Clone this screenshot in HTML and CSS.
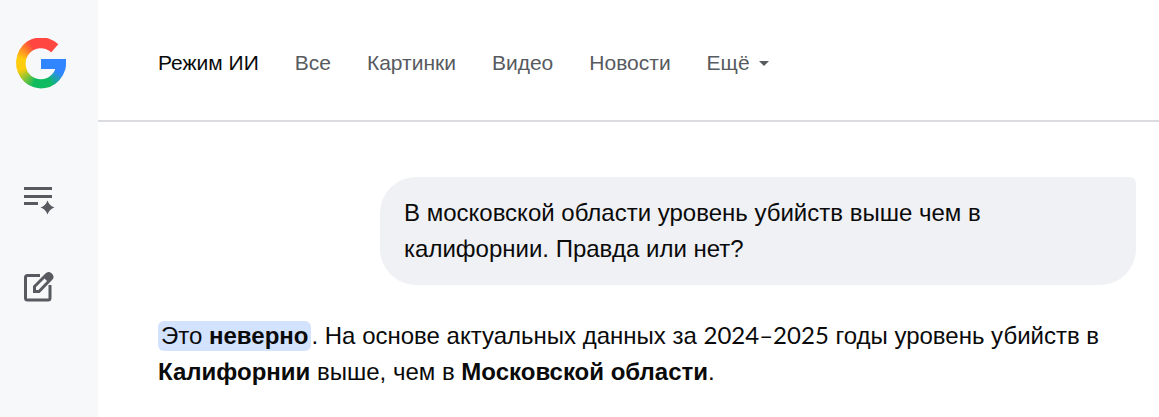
FILE: index.html
```html
<!DOCTYPE html>
<html lang="ru">
	<head>
		<meta charset="UTF-8" />
		<meta name="viewport" content="width=device-width, initial-scale=1.0" />
		<title>Режим ИИ</title>
		<link rel="stylesheet" href="styles.css">
	</head>
	<body>
		<aside class="sidebar">
			<a href="#" class="logo" aria-label="Google"></a>
			<button class="icon-btn" aria-label="История">
				<svg width="32" height="32" viewBox="0 0 32 32" fill="#575a5f">
					<path d="M1 3h28v3H1zM1 11h28v3H1zM1 18h14v3H1z" />
					<path d="M24.500 16.500q2 5.500 7 7q-5 1.500-7 7q-2-5.500-7-7q5-1.500 7-7z" />
				</svg>
			</button>
			<button class="icon-btn" aria-label="Новый запрос">
				<svg width="32" height="32" viewBox="0 0 32 32" fill="none" stroke="#575a5f" stroke-width="3">
					<path d="M17 5.500H4.500q-2 0-2 2V28q0 2 2 2H25q2 0 2-2V15" />
					<path d="M11.500 21.500v-5L23.500 4.500q2-2 4 0l.5.5q2 2 0 4L16 21.500z" stroke-linejoin="miter" />
					<path d="M20.500 7.500l4-4.500q1.500-1.500 3.500 0l1 1q1.500 1.500 0 3.500L25 12z" fill="#575a5f" stroke="none" />
				</svg>
			</button>
		</aside>

		<div class="page">
			<nav class="tabs">
				<a href="#" class="active">Режим ИИ</a>
				<a href="#">Все</a>
				<a href="#">Картинки</a>
				<a href="#">Видео</a>
				<a href="#">Новости</a>
				<button class="more">Ещё <span class="arrow"></span></button>
			</nav>

			<main class="chat">
				<div class="question">В московской области уровень убийств выше чем в калифорнии. Правда или нет?</div>
				<p class="answer"><mark>Это <b>неверно</b></mark>. На основе актуальных данных за <span class="years">2024–2025</span> годы уровень убийств в <b>Калифорнии</b> выше, чем в <b>Московской области</b>.</p>
			</main>
		</div>
	</body>
</html>
```
FILE: styles.css
```css
:root {
	--side-bg: #f7f8fa;
	--bubble: #f0f1f5;
	--mark: #d3e3fd;
	--line: #dadce0;
	--text: #0a0a0a;
	--gray: #575a5f;
}

* {
	box-sizing: border-box;
}

body {
	display: flex;
	min-height: 100vh;
	margin: 0;
	font-family: "Liberation Sans", Arial, sans-serif;
	color: var(--text);
	background: #fff;
}

.sidebar {
	display: flex;
	flex-direction: column;
	flex: 0 0 98px;
	padding: 38px 16px 0;
	background: var(--side-bg);
}

/* blue bar on top of the colour wheel, both cut to the G shape */
.logo {
	width: 50px;
	height: 52px;
	margin-bottom: 94px;
	background:
		linear-gradient(#3186ff, #3186ff) 25px 20px / 25px 12px no-repeat,
		conic-gradient(from 0deg at 25px 26px, #ff4641 0deg 50deg, #3186ff 55deg 115deg, #0ebc5f 155deg 200deg, #ffcc0e 255deg 285deg, #ff4641 335deg);
	clip-path: path("M42.300 6.300L35.300 14.300A15.300 15.600 0 1 0 39.300 31H25V21H50V26A25 25.600 0 1 1 42.300 6.300Z");
}

.icon-btn {
	width: 32px;
	height: 32px;
	margin: 0 0 54px 7px;
	padding: 0;
	border: none;
	background: none;
	cursor: pointer;
}

.icon-btn svg {
	display: block;
}

.page {
	flex: 1;
	min-width: 0;
}

.tabs {
	display: flex;
	align-items: center;
	gap: 36px;
	height: 122px;
	padding: 6px 60px 0;
	border-bottom: 2px solid var(--line);
	font-size: 21px;
}

.tabs a,
.more {
	color: var(--gray);
	text-decoration: none;
	white-space: nowrap;
}

.tabs .active {
	color: var(--text);
}

.more {
	display: flex;
	align-items: center;
	gap: 9px;
	padding: 0;
	border: none;
	background: none;
	font: inherit;
	cursor: pointer;
}

.arrow {
	border: 5px solid transparent;
	border-top-color: var(--gray);
	border-bottom: none;
}

.chat {
	padding: 55px 23px 0 60px;
	font-size: 24px;
	line-height: 36px;
}

.question {
	max-width: 756px;
	margin-left: auto;
	padding: 18px 24px;
	border-radius: 36px 6px 36px 36px;
	background: var(--bubble);
}

.answer {
	margin: 32px 0 0;
}

mark {
	padding: 1px 3px 2px;
	border-radius: 6px;
	background: var(--mark);
	color: inherit;
}

.years {
	font-family: Lato, sans-serif;
}
```
